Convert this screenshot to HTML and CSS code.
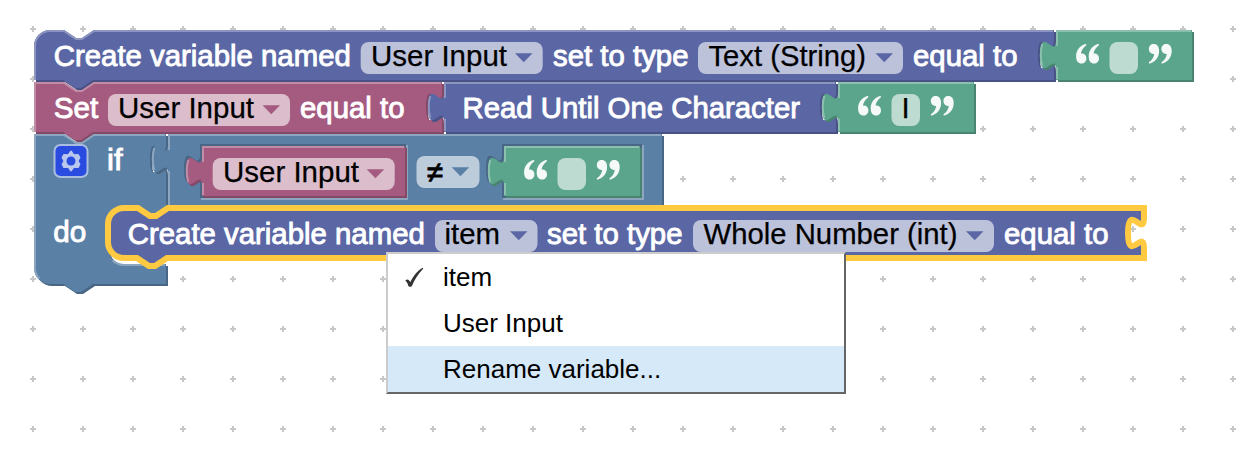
FILE: index.html
```html
<!DOCTYPE html>
<html lang="en">
<head>
<meta charset="utf-8">
<title>Block workspace</title>
<link rel="stylesheet" href="styles.css">
</head>
<body>
<main class="workspace">
<svg class="canvas" width="1250" height="452" viewBox="0 0 1250 452">
  <defs>
    <pattern id="grid" x="8" y="4" width="50" height="50" patternUnits="userSpaceOnUse">
      <path class="grid-mark" d="M22 25h6M25 22v6"/>
    </pattern>
    <g id="quote-open">
      <path id="quote-mark" d="M10.800 .8C4.800 2.200 .8 7 .8 13.400c0 4.400 2.100 7 5.400 7 2.900 0 4.900-2.100 4.900-5 0-2.900-2-4.800-4.600-4.800h-.8c.4-3.200 2-5.900 5.300-8.400z"/>
      <use href="#quote-mark" x="12.600"/>
    </g>
    <g id="text-block">
      <g transform="scale(2)">
        <path class="dark" transform="translate(1,1)" d="M0,0H68V25H0V20c0,-10 -8,8 -8,-7.500s8,2.500 8,-7.500z"/>
        <path class="face" d="M0,0H68V25H0V20c0,-10 -8,8 -8,-7.500s8,2.500 8,-7.500z"/>
        <path class="light" d="M.5,24.500V18.500M-6.860,18q-1.520,-5.500 0,-11M.5,8V.5H67.500"/>
      </g>
      <use class="quote" href="#quote-open" x="19.300" y="13"/>
      <rect class="field" x="53.500" y="12" width="28.500" height="32" rx="8"/>
      <use class="quote" href="#quote-open" transform="translate(116.500,34.500) rotate(180)"/>
    </g>
    <path id="arrow" d="M0 0H17.500L8.750 9z"/>
  </defs>

  <rect width="1250" height="452" fill="url(#grid)"/>

  <g class="blue" transform="translate(34,30)">
    <g transform="scale(2)">
      <path class="dark" transform="translate(1,1)" d="M0,8A8,8 0 0,1 8,0H15l6,4 3,0 6,-4H510v5c0,10 -8,-8 -8,7.500s8,-2.500 8,7.500V25H29.500l-6,4 -3,0 -6,-4H0z"/>
      <path class="face" d="M0,8A8,8 0 0,1 8,0H15l6,4 3,0 6,-4H510v5c0,10 -8,-8 -8,7.500s8,-2.500 8,7.500V25H29.500l-6,4 -3,0 -6,-4H0z"/>
      <path class="light" d="M.5,25V8A7.500,7.500 0 0,1 8,.5H15l6,4 3,0 6,-4H509.500"/>
    </g>
    <text class="label" x="19.800" y="36" textLength="297" lengthAdjust="spacingAndGlyphs">Create variable named</text>
    <rect class="field" x="326.700" y="12" width="182" height="32" rx="8"/>
    <text class="value" x="337" y="36" textLength="136" lengthAdjust="spacingAndGlyphs">User Input</text>
    <use class="face" href="#arrow" x="481" y="23.300"/>
    <text class="label" x="519" y="36" textLength="135.500" lengthAdjust="spacingAndGlyphs">set to type</text>
    <rect class="field" x="664" y="12" width="205" height="32" rx="8"/>
    <text class="value" x="674.500" y="36" textLength="157.500" lengthAdjust="spacingAndGlyphs">Text (String)</text>
    <use class="face" href="#arrow" x="841.500" y="23.300"/>
    <text class="label" x="879" y="36" textLength="104.500" lengthAdjust="spacingAndGlyphs">equal to</text>
  </g>
  <use class="green" href="#text-block" x="1056" y="30"/>

  <g class="pink" transform="translate(34,82)">
    <g transform="scale(2)">
      <path class="dark" transform="translate(1,1)" d="M0,0H15l6,4 3,0 6,-4H204v5c0,10 -8,-8 -8,7.500s8,-2.500 8,7.500V25H29.500l-6,4 -3,0 -6,-4H0z"/>
      <path class="face" d="M0,0H15l6,4 3,0 6,-4H204v5c0,10 -8,-8 -8,7.500s8,-2.500 8,7.500V25H29.500l-6,4 -3,0 -6,-4H0z"/>
      <path class="light" d="M.5,25V.5H15l6,4 3,0 6,-4H203.500"/>
    </g>
    <text class="label" x="19.800" y="36" textLength="44.500" lengthAdjust="spacingAndGlyphs">Set</text>
    <rect class="field" x="74" y="12" width="182" height="32" rx="8"/>
    <text class="value" x="84" y="36" textLength="136" lengthAdjust="spacingAndGlyphs">User Input</text>
    <use class="face" href="#arrow" x="228.500" y="23.300"/>
    <text class="label" x="266" y="36" textLength="104.500" lengthAdjust="spacingAndGlyphs">equal to</text>
  </g>

  <g class="blue" transform="translate(444,82)">
    <g transform="scale(2)">
      <path class="dark" transform="translate(1,1)" d="M0,0H196v5c0,10 -8,-8 -8,7.500s8,-2.500 8,7.500V25H0V20c0,-10 -8,8 -8,-7.500s8,2.500 8,-7.500z"/>
      <path class="face" d="M0,0H196v5c0,10 -8,-8 -8,7.500s8,-2.500 8,7.500V25H0V20c0,-10 -8,8 -8,-7.500s8,2.500 8,-7.500z"/>
      <path class="light" d="M.5,24.500V18.500M-6.860,18q-1.520,-5.500 0,-11M.5,8V.5H195.500"/>
    </g>
    <text class="label" x="18.500" y="36" textLength="337.500" lengthAdjust="spacingAndGlyphs">Read Until One Character</text>
  </g>
  <use class="green" href="#text-block" x="838" y="82"/>
  <text class="value" x="901.500" y="118">I</text>

  <g class="steel" transform="translate(34,134)">
    <g transform="scale(2)">
      <path class="dark" transform="translate(1,1)" d="M0,0H15l6,4 3,0 6,-4H66v5c0,10 -8,-8 -8,7.500s8,-2.500 8,7.500V37H67l-6,4 -3,0 -6,-4h-7a8,8 0 0,0 -8,8v12a8,8 0 0,0 8,8H66V75H29.500l-6,4 -3,0 -6,-4H8a8,8 0 0,1 -8,-8z"/>
      <path class="face" d="M0,0H15l6,4 3,0 6,-4H66v5c0,10 -8,-8 -8,7.500s8,-2.500 8,7.500V37H67l-6,4 -3,0 -6,-4h-7a8,8 0 0,0 -8,8v12a8,8 0 0,0 8,8H66V75H29.500l-6,4 -3,0 -6,-4H8a8,8 0 0,1 -8,-8z"/>
      <path class="light" d="M2.700,72.300A7.500,7.500 0 0,1 .5,67V.5H15l6,4 3,0 6,-4H65.500M39.300,63.200a8.500,8.500 0 0,0 5.700,2.300H65.500"/>
    </g>
    <g class="gear">
      <rect x="20.500" y="11" width="33" height="32" rx="6"/>
      <path class="gear-teeth" d="M37 17.500l2.600 3.800 4.400-.3 1.400 2.600-1.900 3.400 1.900 3.400-1.400 2.600-4.400-.3L37 36.500l-2.600-3.800-4.400.3-1.400-2.600 1.900-3.400-1.900-3.400 1.400-2.600 4.400.3z"/>
      <circle cx="37" cy="27" r="4.500"/>
    </g>
    <text class="label" x="73" y="35.500" textLength="15.500" lengthAdjust="spacingAndGlyphs">if</text>
    <text class="label" x="19.300" y="108" textLength="33" lengthAdjust="spacingAndGlyphs">do</text>
  </g>

  <g class="steel" transform="translate(168,134)">
    <g transform="scale(2)">
      <path class="dark" transform="translate(1,1)" d="M0,0H247V36H0V20c0,-10 -8,8 -8,-7.500s8,2.500 8,-7.500z"/>
      <path class="face" d="M0,0H247V36H0V20c0,-10 -8,8 -8,-7.500s8,2.500 8,-7.500z"/>
      <path class="dark" d="M119,5H16v5c0,10 -8,-8 -8,7.500s8,-2.500 8,7.500V32H119zM237,5H167v5c0,10 -8,-8 -8,7.500s8,-2.500 8,7.500V32H237z"/>
      <path class="light" d="M.5,36V18.500M-6.860,18q-1.520,-5.500 0,-11M.5,8V.5H246.500M119.500,5.500V32.500H16.500M237.500,5.500V32.500H167.500"/>
    </g>
    <rect class="field" x="248.500" y="22" width="63" height="32" rx="8"/>
    <text class="value operator" x="259" y="48" textLength="16" lengthAdjust="spacingAndGlyphs">≠</text>
    <use class="face" href="#arrow" x="283.700" y="33.300"/>
  </g>

  <g class="pink" transform="translate(202,146)">
    <g transform="scale(2)">
      <path class="dark" transform="translate(1,1)" d="M0,0H101.500V25H0V20c0,-10 -8,8 -8,-7.500s8,2.500 8,-7.500z"/>
      <path class="face" d="M0,0H101.500V25H0V20c0,-10 -8,8 -8,-7.500s8,2.500 8,-7.500z"/>
      <path class="light" d="M.5,24.500V18.500M-6.860,18q-1.520,-5.500 0,-11M.5,8V.5H101"/>
    </g>
    <rect class="field" x="10.700" y="12" width="182" height="32" rx="8"/>
    <text class="value" x="21" y="36" textLength="136" lengthAdjust="spacingAndGlyphs">User Input</text>
    <use class="face" href="#arrow" x="164.700" y="23.300"/>
  </g>
  <use class="green" href="#text-block" x="504" y="146"/>

  <g class="blue" transform="translate(108,208)">
    <path class="face selected" transform="scale(2)" d="M0,8A8,8 0 0,1 8,0H15l6,4 3,0 6,-4H518v5c0,10 -8,-8 -8,7.500s8,-2.500 8,7.500V25H29.500l-6,4 -3,0 -6,-4H8a8,8 0 0,1 -8,-8z"/>
    <text class="label" x="19.800" y="36" textLength="297" lengthAdjust="spacingAndGlyphs">Create variable named</text>
    <rect class="field" x="327" y="12" width="102.500" height="32" rx="8"/>
    <text class="value" x="336.500" y="36" textLength="55.500" lengthAdjust="spacingAndGlyphs">item</text>
    <use class="face" href="#arrow" x="402" y="23.300"/>
    <text class="label" x="439" y="36" textLength="135.500" lengthAdjust="spacingAndGlyphs">set to type</text>
    <rect class="field" x="585" y="12" width="301" height="32" rx="8"/>
    <text class="value" x="595.500" y="36" textLength="254" lengthAdjust="spacingAndGlyphs">Whole Number (int)</text>
    <use class="face" href="#arrow" x="858" y="23.300"/>
    <text class="label" x="896" y="36" textLength="104.500" lengthAdjust="spacingAndGlyphs">equal to</text>
  </g>
</svg>

<ul class="menu">
  <li class="menu-item">
    <svg class="check" width="22" height="22" viewBox="0 0 22 22"><path d="M1.300 13.500C3 11.800 5 12 6.300 15.200 9 9.500 13 4 18.700 .8L19.300 1.500C14 7 10.500 12.500 7.800 19.200 6.500 20 5 20 4.300 19 3.800 16.500 3 15 1.300 13.500z"/></svg>
    <span>item</span>
  </li>
  <li class="menu-item"><span>User Input</span></li>
  <li class="menu-item menu-item-active"><span>Rename variable...</span></li>
</ul>
</main>
</body>
</html>
```
FILE: styles.css
```css
body {
  margin: 0;
  background: #fff;
  font-family: "Liberation Sans", Arial, sans-serif;
}

.workspace {
  position: relative;
  width: 1250px;
  height: 452px;
  overflow: hidden;
}

.canvas {
  display: block;
}

.grid-mark {
  fill: none;
  stroke: #c8c8c8;
  stroke-width: 2;
}

/* Block colour families */
.blue { --face: #5b67a5; --dark: #495284; --light: #8c95c0; }
.pink { --face: #a55b80; --dark: #844966; --light: #c08ca6; }
.green { --face: #5ba58c; --dark: #498470; --light: #8cc0ae; }
.steel { --face: #5b80a5; --dark: #496684; --light: #8ca6c0; }

.face { fill: var(--face); }
.dark { fill: var(--dark); }
.light { fill: none; stroke: var(--light); stroke-width: 1; }

.selected {
  stroke: #ffca42;
  stroke-width: 3;
}

.field { fill: #fff; fill-opacity: 0.6; }
.quote { fill: #fff; fill-opacity: 0.94; }

.label,
.value {
  font-size: 29.33px;
}

.label {
  fill: #fff;
  stroke: #fff;
  stroke-width: 0.9px;
}

.value {
  fill: #000;
  stroke: #000;
  stroke-width: 0.25px;
}

.operator { stroke-width: 1px; }

.gear rect {
  fill: #2a4be0;
  stroke: #a9bde0;
  stroke-width: 2;
}

.gear-teeth {
  fill: #b9c7ee;
  stroke: #b9c7ee;
  stroke-width: 2;
  stroke-linejoin: round;
}

.gear circle { fill: #2a4be0; }

.menu {
  position: absolute;
  left: 386px;
  top: 252px;
  width: 456px;
  margin: 0;
  padding: 0;
  list-style: none;
  background: #fff;
  border: 2px solid;
  border-color: #ccc #666 #666 #ccc;
}

.menu-item {
  position: relative;
  display: flex;
  align-items: center;
  height: 46px;
  padding-left: 55px;
  font-size: 26px;
  color: #000;
}

.menu-item-active { background: #d6e9f8; }

.check {
  position: absolute;
  left: 16px;
  top: 13px;
  fill: #333;
}
```
